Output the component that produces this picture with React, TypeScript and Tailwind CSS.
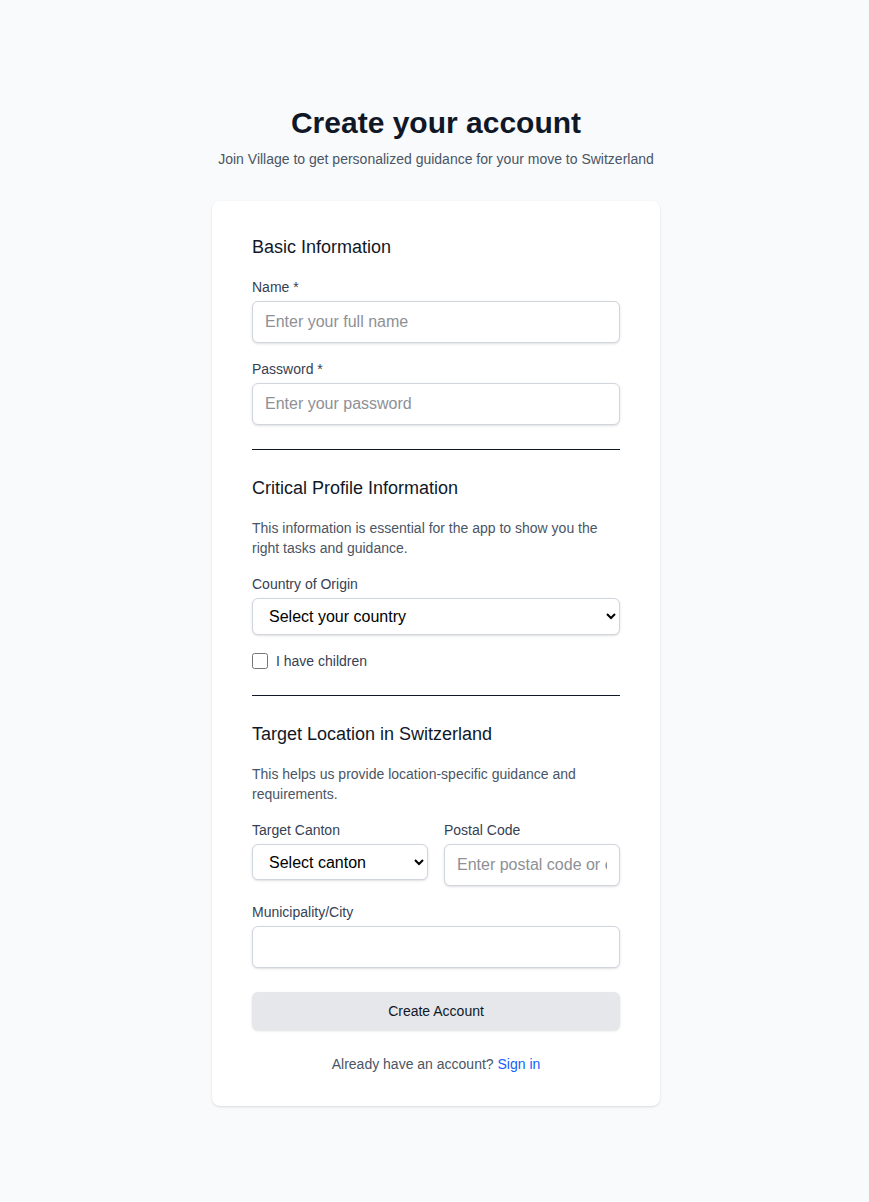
import { useState } from 'react';

const inputClass =
  'mt-1 block w-full h-[42px] px-3 rounded-md border border-gray-300 bg-white text-base text-gray-900 shadow-sm outline-none placeholder:text-[#8e9096] focus:border-blue-500';

const selectClass =
  'mt-1 block w-full px-3 rounded-md border border-gray-300 bg-white text-base text-black shadow-sm outline-none';

export default function App() {
  const [hasChildren, setHasChildren] = useState(false);

  return (
    <div
      className="min-h-screen bg-gray-50 pt-[105px] pb-[96px] pl-[19px] pr-4"
      style={{ fontFamily: '"Liberation Sans", Arial, sans-serif' }}
    >
      <div className="mx-auto w-full max-w-md">
        <h1 className="text-center text-3xl font-bold text-gray-900">Create your account</h1>
        <p className="mt-2 text-center text-sm text-gray-600">
          Join Village to get personalized guidance for your move to Switzerland
        </p>

        <form
          className="mt-8 rounded-lg bg-white px-10 py-8 shadow-sm"
          onSubmit={(e) => e.preventDefault()}
        >
          {/* Basic info */}
          <div>
            <h2 className="text-lg font-medium text-gray-900">Basic Information</h2>
            <div className="mt-4">
              <label className="block text-sm text-gray-700">Name *</label>
              <input type="text" placeholder="Enter your full name" className={inputClass} />
            </div>
            <div className="mt-4">
              <label className="block text-sm text-gray-700">Password *</label>
              <input type="password" placeholder="Enter your password" className={inputClass} />
            </div>
          </div>

          {/* Critical profile */}
          <div className="mt-6 border-t border-gray-900 pt-6">
            <h2 className="text-lg font-medium text-gray-900">Critical Profile Information</h2>
            <p className="mt-4 text-sm text-gray-600">
              This information is essential for the app to show you the right tasks and guidance.
            </p>
            <div className="mt-4">
              <label className="block text-sm text-gray-700">Country of Origin</label>
              <select className={`${selectClass} h-[37px]`} defaultValue="">
                <option value="">Select your country</option>
                <option value="de">Germany</option>
                <option value="fr">France</option>
                <option value="us">United States</option>
              </select>
            </div>
            <label className="mt-4 flex items-center">
              <input
                type="checkbox"
                checked={hasChildren}
                onChange={(e) => setHasChildren(e.target.checked)}
                className="h-4 w-4 rounded border-gray-300"
              />
              <span className="ml-2 text-sm text-gray-700">I have children</span>
            </label>
          </div>

          {/* Target location */}
          <div className="mt-6 border-t border-gray-900 pt-6">
            <h2 className="text-lg font-medium text-gray-900">Target Location in Switzerland</h2>
            <p className="mt-4 text-sm text-gray-600">
              This helps us provide location-specific guidance and requirements.
            </p>
            <div className="mt-4 grid grid-cols-2 gap-4">
              <div>
                <label className="block text-sm text-gray-700">Target Canton</label>
                <select className={`${selectClass} h-[36px]`} defaultValue="">
                  <option value="">Select canton</option>
                  <option value="ZH">Zürich</option>
                  <option value="BE">Bern</option>
                  <option value="GE">Geneva</option>
                </select>
              </div>
              <div>
                <label className="block text-sm text-gray-700">Postal Code</label>
                <input type="text" placeholder="Enter postal code or city" className={inputClass} />
              </div>
            </div>
            <div className="mt-4">
              <label className="block text-sm text-gray-700">Municipality/City</label>
              <input type="text" className={inputClass} />
            </div>
          </div>

          <button
            type="submit"
            className="mt-6 h-[38px] w-full rounded-md bg-gray-200 text-sm text-gray-900 shadow-sm"
          >
            Create Account
          </button>

          <p className="mt-6 text-center text-sm text-gray-600">
            Already have an account?{' '}
            <a href="#" className="text-blue-600">
              Sign in
            </a>
          </p>
        </form>
      </div>
    </div>
  );
}
